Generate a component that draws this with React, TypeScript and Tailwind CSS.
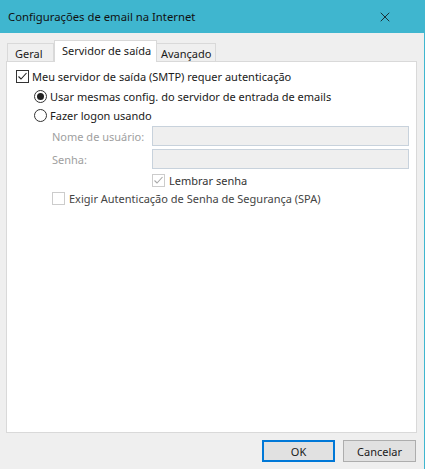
import { X } from "lucide-react";

const font = { fontFamily: '"Noto Sans", "Open Sans", sans-serif' };

function Check({ checked, disabled }: { checked?: boolean; disabled?: boolean }) {
  return (
    <span
      className={`flex h-[13px] w-[13px] shrink-0 items-center justify-center border bg-white ${
        disabled ? "border-[#cccccc]" : "border-[#333333]"
      }`}
    >
      {checked && (
        <svg width="11" height="11" viewBox="0 0 11 11">
          <path d="M1.5 5.5 L4 8 L9.5 2" fill="none" stroke={disabled ? "#a8a8a8" : "#222222"} strokeWidth="1.1" />
        </svg>
      )}
    </span>
  );
}

function Radio({ checked }: { checked?: boolean }) {
  return (
    <span className="flex h-[13px] w-[13px] shrink-0 items-center justify-center rounded-full border border-[#333333] bg-white">
      {checked && <span className="h-[7px] w-[7px] rounded-full bg-[#222222]" />}
    </span>
  );
}

export default function App() {
  return (
    <div
      className="flex h-[469px] w-[425px] flex-col whitespace-nowrap border-r border-[#3fb6cf] bg-[#efefef] text-[11px] leading-[15px] text-[#1a1a1a]"
      style={font}
    >
      <div className="flex h-[33px] shrink-0 items-center justify-between bg-[#3fb6cf] pl-[8px] pr-[31px]">
        <span className="text-[11.3px] text-[#111111]">Configurações de email na Internet</span>
        <X size={16} strokeWidth={1.2} color="#111" />
      </div>

      <div className="mx-[6px] mt-[7px] flex h-[21px] items-end">
        <div className="ml-[1px] flex h-[18px] w-[47px] items-center border border-b-0 border-[#d9d9d9] bg-[#efefef] pl-[7px] pt-[1px]">Geral</div>
        <div className="z-10 -mb-px flex h-[22px] w-[103px] items-center border border-b-0 border-[#d9d9d9] bg-white pb-[2px] pl-[7px]">
          Servidor de saída
        </div>
        <div className="flex h-[18px] w-[59px] items-center border border-b-0 border-l-0 border-[#d9d9d9] bg-[#efefef] pl-[4px] pt-[1px]">Avançado</div>
      </div>

      <div className="mx-[6px] flex h-[372px] w-[411px] flex-col border border-[#d9d9d9] bg-white">
        <div className="mt-[6px] flex h-[16px] items-center gap-[3px] pl-[9px]">
          <Check checked />
          <span>Meu servidor de saída (SMTP) requer autenticação</span>
        </div>
        <div className="mt-[4px] flex h-[16px] items-center gap-[3px] pl-[27px]">
          <Radio checked />
          <span>Usar mesmas config. do servidor de entrada de emails</span>
        </div>
        <div className="mt-[3px] flex h-[16px] items-center gap-[3px] pl-[27px]">
          <Radio />
          <span>Fazer logon usando</span>
        </div>

        <div className="mt-[3px] flex h-[20px] items-center pl-[45px]">
          <span className="w-[100px] text-[#a0a0a0]">Nome de usuário:</span>
          <div className="h-[20px] w-[257px] border border-[#c8d2dc] bg-[#efefef]" />
        </div>
        <div className="mt-[3px] flex h-[20px] items-center pl-[45px]">
          <span className="w-[100px] text-[#a0a0a0]">Senha:</span>
          <div className="h-[20px] w-[257px] border border-[#c8d2dc] bg-[#efefef]" />
        </div>
        <div className="mt-[3px] flex h-[16px] items-center gap-[4px] pl-[145px]">
          <Check checked disabled />
          <span className="text-[#333333]">Lembrar senha</span>
        </div>
        <div className="mt-[2px] flex h-[16px] items-center gap-[4px] pl-[45px]">
          <Check disabled />
          <span className="text-[#444444]">Exigir Autenticação de Senha de Segurança (SPA)</span>
        </div>
      </div>

      <div className="mt-[7px] flex justify-end gap-[8px] pr-[8px]">
        <button className="flex h-[22px] w-[73px] items-center justify-center border-2 border-[#0078d7] bg-[#e1e1e1]">OK</button>
        <button className="flex h-[22px] w-[73px] items-center justify-center border border-[#adadad] bg-[#e1e1e1]">Cancelar</button>
      </div>
    </div>
  );
}
